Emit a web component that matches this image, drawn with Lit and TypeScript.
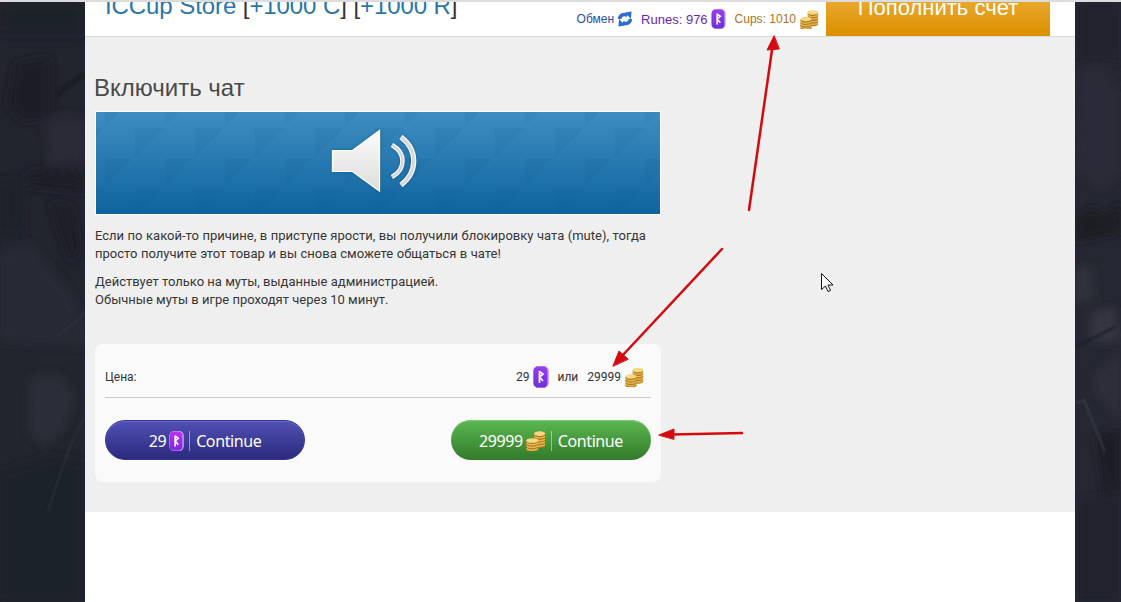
import { LitElement, html, css, svg } from "lit";
import { customElement } from "lit/decorators.js";

let runeId = 0;
const rune = (h: number, w: number, top = "#9a3cf0", bottom = "#6c30dc") => {
  const id = `rg${runeId++}`;
  return html`<svg class="ico" width=${w} height=${h} viewBox="0 0 16 22">
    <defs><linearGradient id=${id} x1="0" y1="0" x2="0" y2="1"><stop offset="0" stop-color=${top}/><stop offset="1" stop-color=${bottom}/></linearGradient></defs>
    <path d="M4 0H12.500L15 2 16 5V17L15 20 12.500 22H4L1 20 0 17V5L1 2Z" fill="#c9a8f5"/>
    <path d="M3.500 0.500H11.500L14 2.500 14.500 5V17L14 19.500 11.500 21.500H3.500L1 19.500 0.500 17V5L1 2.500Z" fill=${`url(#${id})`}/>
    <path d="M6.500 5V17M6.500 5.500L10 8 6.500 11 10 15" fill="none" stroke="#fff" stroke-width="1.700"/>
  </svg>`;
};

const coinStack = (x: number, rx: number, yTop: number, n: number) => {
  const out = [];
  for (let i = n - 1; i >= 0; i--) {
    const y = yTop + i * 2.7;
    out.push(svg`<ellipse cx=${x} cy=${y + 1.1} rx=${rx} ry="2.500" fill="#b07c22"/><ellipse cx=${x} cy=${y} rx=${rx} ry="2.300" fill=${i === 0 ? "#f8d983" : "#e9b850"}/>`);
  }
  return out;
};
const coins = (w = 20, h = 20) => html`<svg class="ico" width=${w} height=${h} viewBox="0 0 20 20">
  ${coinStack(13.6, 5.6, 2.6, 5)}${coinStack(6.300, 6, 9.500, 4)}
</svg>`;

@customElement("app-root")
export class AppRoot extends LitElement {
  static styles = css`
    :host { display: block; position: relative; height: 602px; overflow: hidden; background: #fff; font-family: Roboto, "Liberation Sans", sans-serif; }
    .top { height: 2px; background: #dcdcdc; }
    .page { display: grid; grid-template-columns: 85px 990px 46px; height: 600px; }
    .side { background: #23252f; overflow: hidden; }
    .side svg { display: block; }
    .main { display: flex; flex-direction: column; background: #fff; min-width: 0; }
    header { height: 34px; flex: none; display: flex; align-items: flex-start; overflow: hidden; border-bottom: 1px solid #d9d9d9; padding: 0 25px 0 20px; }
    h1 { margin: -11px 0 0; font: 400 24px/30px "Liberation Sans", sans-serif; letter-spacing: -0.08px; color: #333; white-space: nowrap; }
    h1 span { color: #2a76a8; }
    .bal { margin-left: auto; display: flex; align-items: center; height: 34px; box-sizing: border-box; white-space: nowrap; font-family: "Liberation Sans", sans-serif; }
    .ico { display: block; flex: none; }
    .ex { color: #2b4fa8; font-size: 12px; display: flex; align-items: center; gap: 3px; }
    .ru { color: #6a1fb0; font-size: 13px; display: flex; align-items: center; gap: 3px; margin-left: 8px; }
    .cu { color: #a8731a; font-size: 12px; display: flex; align-items: center; gap: 4px; margin-left: 9px; }
    .pay { width: 224px; height: 34px; flex: none; margin-left: 7px; background: linear-gradient(#e8a62c, #dc9000); color: #fff; font: 22px/24px "Liberation Sans", sans-serif; text-align: center; }
    .pay span { display: block; margin-top: -6px; }
    .zone { height: 475px; flex: none; background: #efefef; padding: 36px 0 0 10px; box-sizing: border-box; }
    .col { width: 566px; }
    h2 { margin: 0 0 0 -1px; font: 400 24px/30px "Liberation Sans", sans-serif; color: #4a4a4a; }
    .banner { margin-top: 8px; height: 104px; box-sizing: border-box; border: 1px solid #fff; background: linear-gradient(#3f8dc1, #0e649e); }
    .banner svg { display: block; }
    p { margin: 0; font-size: 13px; line-height: 18px; color: #363636; }
    .p1 { margin-top: 12px; word-spacing: 0.3px; }
    .p2 { margin-top: 10px; }
    .card { margin-top: 35px; height: 138px; box-sizing: border-box; background: #fafafa; border-radius: 8px; padding: 16px 10px 0; }
    .price { height: 38px; box-sizing: border-box; display: flex; align-items: center; justify-content: space-between; border-bottom: 1px solid #ccc; font-size: 12px; color: #333; padding-bottom: 4px; }
    .opts { display: flex; align-items: center; padding-right: 7px; }
    .g4 { width: 4px; } .g3 { width: 3px; } .g8 { width: 8px; } .g9 { width: 9px; }
    .btns { display: flex; justify-content: space-between; margin-top: 22px; }
    .btn { width: 200px; height: 40px; box-sizing: border-box; border-radius: 20px; display: flex; align-items: center; justify-content: center; color: #fff; font: 16px "Noto Sans", "Open Sans", sans-serif; letter-spacing: -0.4px; padding-top: 1px; }
    .b1 { background: linear-gradient(#5150b6, #2b2a7c); border: 1px solid #35348c; box-shadow: inset 0 1px 0 #6a69c8; }
    .b2 { background: linear-gradient(#5bb851, #327a2a); box-shadow: inset 0 1px 0 #7cca72; }
    .sep { width: 1px; height: 20px; background: rgba(255,255,255,.45); margin: 0 6px 0 5px; }
    .overlay { position: absolute; left: 0; top: 0; pointer-events: none; }
  `;

  sideLeft() {
    return html`<svg width="85" height="600" viewBox="0 0 85 600">
      <defs><filter id="bl" x="-20%" y="-20%" width="140%" height="140%"><feGaussianBlur stdDeviation="5"/></filter><filter id="bs" x="-20%" y="-20%" width="140%" height="140%"><feGaussianBlur stdDeviation="1"/></filter></defs>
      <rect width="85" height="600" fill="#22242e"/>
      <g filter="url(#bl)">
        <path d="M0 0H85V32H0Z" fill="#1f212b"/>
        <path d="M15 62L50 55 50 115 25 120 8 105Z" fill="#1d1f28"/>
        <path d="M45 118L70 112 85 118V160L50 165Z" fill="#2a2c37"/>
        <path d="M25 172L60 165 85 175V190L30 185Z" fill="#1d1f28"/>
        <path d="M0 178L24 178 22 235 0 235Z" fill="#1e2029"/>
        <path d="M50 200L72 205 80 250 70 260Z" fill="#1c1e26"/>
        <path d="M0 250L30 240 70 290 85 320V345L0 340Z" fill="#282a35"/>
        <path d="M30 375L60 372 76 395 66 425 45 445 28 430Z" fill="#2c2e39"/>
        <path d="M0 470L50 455 85 460V600H0Z" fill="#1f212b"/>
      </g>
      <g filter="url(#bs)" fill="none">
        <path d="M85 72L62 88 58 94" stroke="#191a22" stroke-width="4"/>
        <path d="M85 415C70 440 60 470 48 510" stroke="#2e303b" stroke-width="1.500"/>
        <path d="M55 335C68 327 78 318 85 310" stroke="#2f313c" stroke-width="2"/>
      </g>
    </svg>`;
  }
  sideRight() {
    return html`<svg width="46" height="600" viewBox="0 0 46 600">
      <defs><filter id="br" x="-20%" y="-20%" width="140%" height="140%"><feGaussianBlur stdDeviation="4"/></filter><filter id="bt" x="-20%" y="-20%" width="140%" height="140%"><feGaussianBlur stdDeviation="0.800"/></filter></defs>
      <rect width="46" height="600" fill="#252732"/>
      <g filter="url(#br)">
        <path d="M0 0H46V60H0Z" fill="#21232d"/>
        <path d="M5 65L25 62 46 90V170L30 190 0 170Z" fill="#2a2c38"/>
        <path d="M0 215L20 205 30 215 46 200V230L0 240Z" fill="#1a1b23"/>
        <path d="M0 265H18L20 298 0 302Z" fill="#2e303b"/>
        <path d="M16 310L40 305 46 340 16 340Z" fill="#343642"/>
        <path d="M20 370L46 350V420L20 390Z" fill="#2d2f3a"/>
        <path d="M20 435L46 425V480L30 500Z" fill="#1d1e27"/>
        <path d="M0 500L46 490V600H0Z" fill="#21232d"/>
      </g>
      <g filter="url(#bt)" fill="none">
        <path d="M0 345L40 325" stroke="#1d1e26" stroke-width="2"/>
        <path d="M2 401L9 398 30 450" stroke="#3e404a" stroke-width="1.500"/>
      </g>
    </svg>`;
  }
  bannerPattern() {
    return html`<svg width="564" height="102" viewBox="0 0 564 102">
      <defs>
        <pattern id="tri" width="60" height="60" patternUnits="userSpaceOnUse">
          <path d="M9 46H37L9 74Z" fill="#0a4f86" opacity=".09"/>
          <path d="M9 -14H37L9 14Z" fill="#0a4f86" opacity=".09"/>
          <path d="M39 16H68L39 46Z" fill="#0a4f86" opacity=".09"/>
          <path d="M-21 16H8L-21 46Z" fill="#0a4f86" opacity=".09"/>
        </pattern>
        <linearGradient id="sp" x1="0" y1="0" x2="0" y2="1"><stop offset="0" stop-color="#fcfcfc"/><stop offset="1" stop-color="#dcdcdc"/></linearGradient>
        <filter id="gl" x="-20%" y="-20%" width="140%" height="140%"><feDropShadow dx="0" dy="0" stdDeviation="1.400" flood-color="#0b4a7c" flood-opacity=".6"/></filter>
      </defs>
      <rect width="564" height="102" fill="url(#tri)"/>
      <g filter="url(#gl)">
        <path d="M236.500 38.500H256.500L283.500 18.500V79L256.500 59.500H236.500Z" fill="url(#sp)" stroke="#fff" stroke-width="1.200"/>
        <path d="M296 33C310 41 310 57 296 65" fill="none" stroke="#fff" stroke-width="4.400"/>
        <path d="M296 33C310 41 310 57 296 65" fill="none" stroke="#d4d4d4" stroke-width="2.400"/>
        <path d="M305 25C322 38 322 60 305 73" fill="none" stroke="#fff" stroke-width="5"/>
        <path d="M305 25C322 38 322 60 305 73" fill="none" stroke="#d8d8d8" stroke-width="3"/>
      </g>
    </svg>`;
  }

  render() {
    return html`
      <div class="top"></div>
      <div class="page">
        <div class="side">${this.sideLeft()}</div>
        <div class="main">
          <header>
            <h1><span>ICCup Store</span> [<span>+1000 C</span>] [<span>+1000 R</span>]</h1>
            <div class="bal">
              <span class="ex">Обмен
                <svg class="ico" width="16" height="16" viewBox="0 0 17 16" fill="none"><path d="M2.800 8C3 3.800 7.500 1.800 11 4.500" stroke="#2f6cd0" stroke-width="3.800"/><path d="M8.500 1L15.500 0 14.800 8Z" fill="#2f6cd0"/><path d="M14.200 8C14 12.200 9.500 14.200 6 11.500" stroke="#2f6cd0" stroke-width="3.800"/><path d="M8.500 15L1.500 16 2.200 8Z" fill="#2f6cd0"/></svg>
              </span>
              <span class="ru">Runes: 976 ${rune(20, 15)}</span>
              <span class="cu">Cups: 1010 ${coins(19, 19)}</span>
            </div>
            <div class="pay"><span>Пополнить счет</span></div>
          </header>
          <div class="zone">
            <div class="col">
              <h2>Включить чат</h2>
              <div class="banner">${this.bannerPattern()}</div>
              <p class="p1">Если по какой-то причине, в приступе ярости, вы получили блокировку чата (mute), тогда<br>просто получите этот товар и вы снова сможете общаться в чате!</p>
              <p class="p2">Действует только на муты, выданные администрацией.<br>Обычные муты в игре проходят через 10 минут.</p>
              <div class="card">
                <div class="price">
                  <span>Цена:</span>
                  <span class="opts">29<span class="g4"></span>${rune(22, 16)}<span class="g8"></span>или<span class="g9"></span>29999<span class="g4"></span>${coins(19, 20)}</span>
                </div>
                <div class="btns">
                  <div class="btn b1">29<span class="g3"></span>${rune(20, 15, "#c030f0", "#7a2be0")}<span class="sep"></span>Continue</div>
                  <div class="btn b2">29999<span class="g3"></span>${coins(20, 20)}<span class="sep"></span>Continue</div>
                </div>
              </div>
            </div>
          </div>
          <div style="flex:1"></div>
        </div>
        <div class="side">${this.sideRight()}</div>
      </div>
      <svg class="overlay" width="1121" height="602" viewBox="0 0 1121 602">
        <g fill="#d40a0f" stroke="#d40a0f" stroke-linecap="round">
          <path d="M749 210L772 50" stroke-width="2.500" fill="none"/>
          <path d="M774 36L767 50 779 49Z" stroke-width="1"/>
          <path d="M722 249L622 356" stroke-width="2.500" fill="none"/>
          <path d="M613 366L619 351 628 359Z" stroke-width="1"/>
          <path d="M742 433L672 434.500" stroke-width="2.500" fill="none"/>
          <path d="M659 435L674 429 674 439Z" stroke-width="1"/>
        </g>
        <path d="M821.500 273.500V289.500L825.500 286 828 291.500 830.500 290.500 828 285H833Z" fill="#fff" stroke="#111" stroke-width="1"/>
      </svg>
    `;
  }
}
